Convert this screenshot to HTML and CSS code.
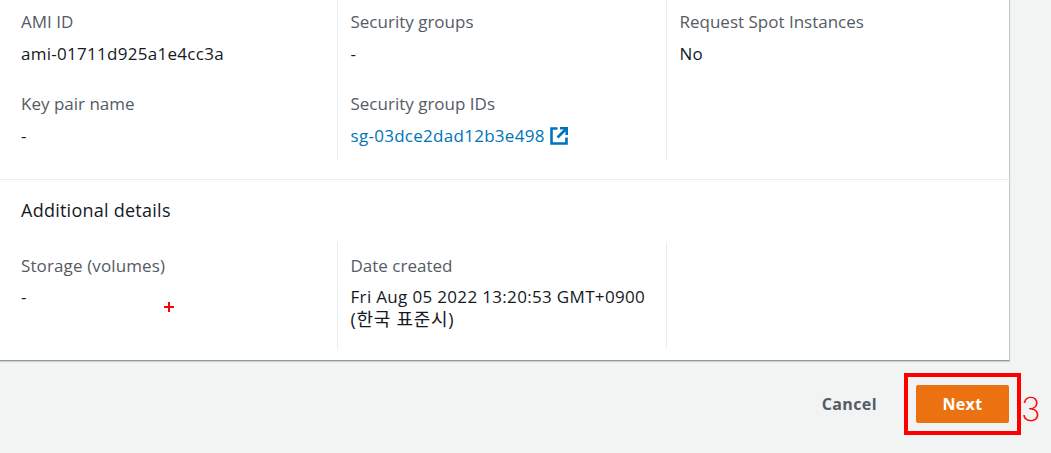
FILE: index.html
```html
<!DOCTYPE html>
<html lang="en">
<head>
<meta charset="utf-8">
<title>Launch instance details</title>
<link rel="stylesheet" href="styles.css">
</head>
<body>
<main class="page">
  <section class="card">
    <div class="grid grid-top">
      <div class="col">
        <div class="item"><div class="label">AMI ID</div><div class="value">ami-01711d925a1e4cc3a</div></div>
        <div class="item"><div class="label">Key pair name</div><div class="value">-</div></div>
      </div>
      <div class="col">
        <div class="item"><div class="label">Security groups</div><div class="value">-</div></div>
        <div class="item"><div class="label">Security group IDs</div>
          <div class="value"><a class="link" href="#">sg-03dce2dad12b3e498<svg class="ext" width="18" height="18" viewBox="0 0 18 18" aria-hidden="true"><path d="M7.5 1.5H1.5v15h15v-6" fill="none" stroke="#0073bb" stroke-width="2.6"/><path d="M10 1.3h6.7V8" fill="none" stroke="#0073bb" stroke-width="2.6"/><path d="M16 2 7.5 10.5" fill="none" stroke="#0073bb" stroke-width="2.6"/></svg></a></div>
        </div>
      </div>
      <div class="col">
        <div class="item"><div class="label">Request Spot Instances</div><div class="value">No</div></div>
      </div>
    </div>
    <div class="section">
      <h2 class="heading">Additional details</h2>
      <div class="grid grid-bottom">
        <div class="col"><div class="item"><div class="label label-wide">Storage (volumes)</div><div class="value">-</div></div></div>
        <div class="col"><div class="item"><div class="label">Date created</div><div class="value value-date">Fri Aug 05 2022 13:20:53 GMT+0900 <span class="ko">(한국 표준시)</span></div></div></div>
        <div class="col"></div>
      </div>
    </div>
  </section>
  <footer class="actions">
    <button class="btn-link" type="button">Cancel</button>
    <button class="btn-primary" type="button">Next</button>
  </footer>
  <span class="mark-plus"></span>
  <span class="mark-box"></span>
  <span class="mark-num">3</span>
</main>
</body>
</html>
```
FILE: styles.css
```css
* { box-sizing: border-box; }
html, body { margin: 0; height: 100%; overflow: hidden; }
body {
  background: #f2f3f3;
  color: #16191f;
  font-family: "Open Sans", "Noto Sans CJK KR", sans-serif;
  font-size: 17px;
  line-height: 22px;
}
.page { position: relative; width: 1051px; height: 453px; overflow: hidden; }
.card {
  width: 1010px;
  height: 361px;
  background: #fff;
  border-right: 1px solid #c4c9c9;
  border-bottom: 1px solid #8f9a9a;
  box-shadow: 0 1px 1px rgba(0, 28, 36, .15);
}
.grid { display: grid; grid-template-columns: 337px 329px 343px; }
.grid-top { height: 160px; }
.grid-bottom { height: 107px; }
.col { padding: 11px 20px 0 21px; }
.col + .col { border-left: 1px solid #eaeded; padding-left: 12.5px; }
.item + .item { margin-top: 28px; }
.label { color: #545b64; height: 22px; }
.label-wide { letter-spacing: .12px; }
.value { margin-top: 10px; letter-spacing: .28px; }
.value-date { letter-spacing: .33px; }
.ko { font-size: 18px; letter-spacing: .7px; }
.link { color: #0073bb; text-decoration: none; display: inline-flex; align-items: center; }
.ext { margin-left: 5px; }
.section { margin-top: 19px; border-top: 1px solid #eaeded; padding-top: 19px; }
.heading { margin: 0 0 21px 21px; font-size: 18px; line-height: 22px; font-weight: 400; letter-spacing: .25px; }
.grid-bottom .col { padding-top: 13px; }
.grid-bottom .value { margin-top: 9px; }
.actions { display: flex; justify-content: flex-end; align-items: center; gap: 39px; padding: 24px 42px 0 0; }
.btn-link, .btn-primary { font: 700 16px/22px "Open Sans", sans-serif; border: 0; cursor: pointer; letter-spacing: .3px; }
.btn-link { background: none; color: #545b64; padding: 0; letter-spacing: .4px; }
.btn-primary { width: 93px; height: 38px; background: #ec7211; color: #fff; border-radius: 2px; padding: 0; }
.mark-box { position: absolute; left: 904px; top: 373px; width: 117px; height: 62px; border: 4px solid #f00; }
.mark-num { position: absolute; left: 1021px; top: 388px; color: #f00; font: 200 33px/42px "Inter", sans-serif; }
.mark-plus { position: absolute; left: 164px; top: 302px; width: 10px; height: 10px;
  background: linear-gradient(#f00, #f00) center/100% 2px no-repeat, linear-gradient(#f00, #f00) center/2px 100% no-repeat; }
```
